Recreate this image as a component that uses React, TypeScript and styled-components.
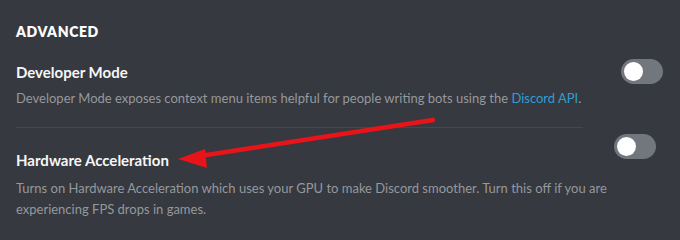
import React from "react";
import styled, { createGlobalStyle } from "styled-components";

const Global = createGlobalStyle`
  html, body { margin: 0; padding: 0; background: #36393f; }
  body { width: 680px; height: 240px; overflow: hidden; font-family: Lato, "Open Sans", sans-serif; }
`;

const Page = styled.div`
  position: relative;
  width: 680px;
  height: 240px;
  background: #36393f;
  padding: 23px 16px 0 16px;
  box-sizing: border-box;
`;

const Heading = styled.h2`
  margin: 0 0 21px 0;
  font-size: 14px;
  line-height: 18px;
  font-weight: 800;
  color: #ffffff;
  letter-spacing: 0.6px;
  text-transform: uppercase;
`;

const Item = styled.div`
  display: flex;
  flex-direction: column;
`;

const Row = styled.div<{ $gap: number }>`
  display: flex;
  align-items: flex-start;
  justify-content: space-between;
  margin-bottom: ${(p) => p.$gap}px;
`;

const Title = styled.div`
  font-size: 15px;
  line-height: 20px;
  font-weight: 700;
  color: #f6f6f7;
`;

const Desc = styled.div`
  font-size: 13px;
  line-height: 21px;
  color: #95989d;
  max-width: 600px;
`;

const Link = styled.a`
  color: #2f9fd3;
  text-decoration: none;
`;

const Divider = styled.div<{ $right: number; $top: number; $bottom: number }>`
  height: 1px;
  background: #44474d;
  margin: ${(p) => p.$top}px ${(p) => p.$right}px ${(p) => p.$bottom}px 0;
`;

const Track = styled.div<{ $shift: number; $lift: number }>`
  position: relative;
  width: 42px;
  height: 25px;
  border-radius: 13px;
  background: #72767d;
  margin-right: ${(p) => p.$shift}px;
  margin-top: ${(p) => p.$lift}px;
  margin-bottom: ${(p) => -25 - p.$lift + 20}px;
  flex-shrink: 0;
`;

const Knob = styled.div`
  position: absolute;
  left: 3px;
  top: 3px;
  width: 19px;
  height: 19px;
  border-radius: 50%;
  background: #ffffff;
`;

const Arrow = styled.svg`
  position: absolute;
  left: 0;
  top: 0;
  pointer-events: none;
`;

function Toggle({ shift, lift }: { shift: number; lift: number }) {
  return (
    <Track $shift={shift} $lift={lift}>
      <Knob />
    </Track>
  );
}

export default function App() {
  return (
    <Page>
      <Global />
      <Heading>Advanced</Heading>
      <Item>
        <Row $gap={6}>
          <Title>Developer Mode</Title>
          <Toggle shift={1} lift={-3} />
        </Row>
        <Desc>
          Developer Mode exposes context menu items helpful for people writing bots using the{" "}
          <Link href="#">Discord API</Link>.
        </Desc>
      </Item>
      <Divider $right={81} $top={18} $bottom={22} />
      <Item>
        <Row $gap={8}>
          <Title>Hardware Acceleration</Title>
          <Toggle shift={8} lift={-16} />
        </Row>
        <Desc>
          Turns on Hardware Acceleration which uses your GPU to make Discord smoother. Turn this off if you are
          experiencing FPS drops in games.
        </Desc>
      </Item>
      <Divider $right={0} $top={20} $bottom={0} />
      <Arrow width="680" height="240" viewBox="0 0 680 240">
        <path d="M433 120 L200 156" stroke="#e8141a" strokeWidth="4.5" strokeLinecap="round" fill="none" />
        <path d="M178 159 L205 149 L207 168 Z" fill="#e8141a" />
      </Arrow>
    </Page>
  );
}
